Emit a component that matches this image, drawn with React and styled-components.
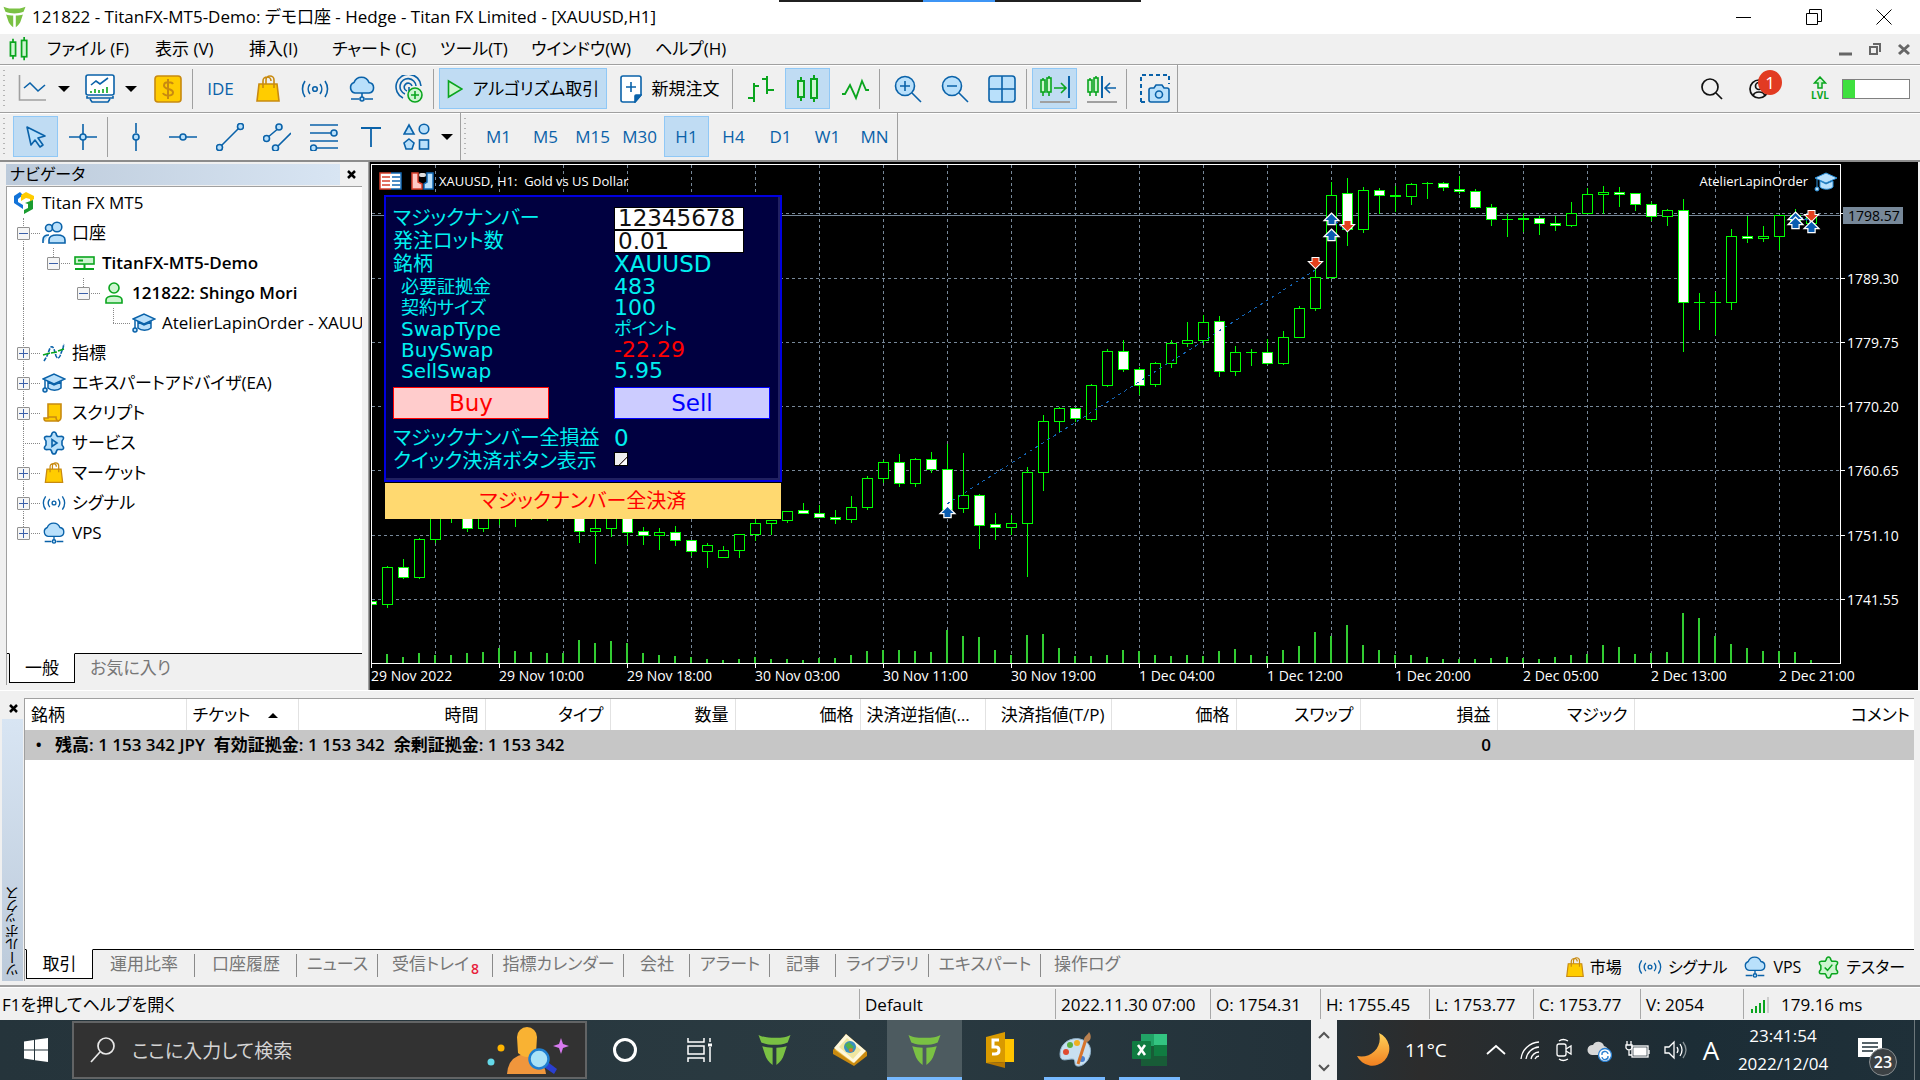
import React from "react";
import styled, { createGlobalStyle, css } from "styled-components";

const Global = createGlobalStyle`
  *, *::before, *::after { box-sizing: border-box; }
  body { margin: 0; background: #f0f0f0; }
  button, input { font: inherit; color: inherit; margin: 0; }
  button { background: none; border: 0; padding: 0; }
  svg { display: block; flex: none; }
  ul { list-style: none; margin: 0; padding: 0; }
`;

const BLUE = "#0a62a9";
const SKY = "#b9e0fb";
const GREEN = "#0aa51e";
const MINT = "#cdf5d0";
const GOLD = "#ffcc00";
const OCHRE = "#c88a10";

/* ---------- icons ---------- */

const Icon = ({ w = 28, h = 28, box = "0 0 28 28", children, ...p }) => (
  <svg width={w} height={h} viewBox={box} fill="none" stroke={BLUE} strokeWidth="1.6" aria-hidden="true" {...p}>{children}</svg>
);

const TitanLogo = ({ w, h, color = "#7ac143" }) => (
  <svg width={w} height={h} viewBox="0 0 34 34" fill={color} aria-hidden="true">
    <path d="M0 1c6 3 12 3 17 3s11 0 17-3l-3 8c-5 2-9 2.500-14 2.500S8 11 3 9z" />
    <path d="M4 13c3 1 7 1.500 11 1.500V33c-4-3-7-7-8-11zM30 13c-3 1-7 1.500-11 1.500V33c4-3 7-7 8-11z" />
  </svg>
);

const BagIcon = ({ w = 24, h = 28 }) => (
  <Icon w={w} h={h} box="0 0 24 28" stroke={OCHRE}>
    <path d="M3 9h18l2 17H1z" fill={GOLD} />
    <path d="M7 13V6a4 4 0 0 1 8 0M10 9V5a4 4 0 0 1 8 0v8" />
  </Icon>
);
const SignalIcon = ({ w = 28, h = 24 }) => (
  <Icon w={w} h={h} box="0 0 28 24">
    <circle cx="14" cy="12" r="2.300" />
    <path d="M9 7a8 8 0 0 0 0 10M19 7a8 8 0 0 1 0 10M4 4a14 14 0 0 0 0 16M24 4a14 14 0 0 1 0 16" />
  </Icon>
);
const CloudIcon = ({ w = 28, h = 26 }) => (
  <Icon w={w} h={h} box="0 0 28 26">
    <path d="M7 17a5.500 5.500 0 0 1-1-10.500 8 8 0 0 1 15 0A5.300 5.300 0 0 1 21 17z" fill={SKY} />
    <path d="M14 17v4M3 23h8M17 23h8" /><circle cx="14" cy="23" r="2" fill={SKY} />
  </Icon>
);
const CapIcon = ({ w = 24, h = 20 }) => (
  <Icon w={w} h={h} box="0 0 24 20" strokeWidth="1.500">
    <path d="M1 6l11-5 11 5-11 5z" fill={SKY} />
    <path d="M6 9v6c3 3 10 3 13 0V9l-7 3z" fill={SKY} />
    <path d="M3 7v9" /><circle cx="3" cy="17" r="2" fill={SKY} />
  </Icon>
);
const Gear = ({ green, w = 24 }) => (
  <Icon w={w} h={w} box="0 0 24 24" stroke={green ? GREEN : BLUE}>
    <path d="M12 1q2 0 2.500 3l1 1.500h2.500q3-.5 3.500 1t-1.500 3.500v4q2 2 1.500 3.500t-3.500 1h-2.500l-1 1.500Q14 23 12 23t-2.500-3l-1-1.500H6q-3 .5-3.500-1T4 14v-4Q2 8 2.500 6.500t3.500-1h2.500l1-1.500Q10 1 12 1z" fill={green ? MINT : SKY} strokeLinejoin="round" />
    {green ? <path d="M8 12l3 3 5-6" /> : <path d="M10 8.500v7l5-3.500z" />}
  </Icon>
);

const LineIcon = () => (
  <Icon><path d="M1.500 0v25H28" stroke="#a0a0a0" /><path d="M6 13l6-5 8 8 7-6" /></Icon>
);
const ProfileIcon = () => (
  <Icon w={30} h={30} box="0 0 30 30">
    <rect x="1" y="1" width="28" height="20" rx="2" fill="#fff" />
    <path d="M2 22v2h26v-2M5 25l2 3h16l2-3" />
    <path d="M6 11l5-4 4 3 8-6" /><path d="M6 19v-2M10 19v-4M14 19v-3M18 19v-4M22 19v-6" stroke={GREEN} />
  </Icon>
);
const DollarIcon = () => (
  <Icon stroke={OCHRE}>
    <rect x="1" y="1" width="26" height="26" rx="3" fill={GOLD} />
    <path d="M19 9c-1-2-9-3-9 1.500S19 13 19 17.500 10 21 9 18M14 4v20" strokeWidth="2" />
  </Icon>
);
const RadarIcon = () => (
  <Icon>
    <path d="M8 23A12.500 12.500 0 1 1 26 11M10 19A8 8 0 1 1 21 11" /><path d="M12 16a4 4 0 1 1 5-5" />
    <path d="M14 12v4" /><circle cx="20" cy="20" r="7" fill={MINT} stroke={GREEN} /><path d="M20 16v8M16 20h8" stroke={GREEN} />
  </Icon>
);
const PlayIcon = () => (
  <Icon w={16} h={20} box="0 0 16 20" stroke={GREEN}><path d="M1.500 2v16L15 10z" fill={MINT} /></Icon>
);
const NewDocIcon = () => (
  <Icon w={22} h={28} box="0 0 22 28">
    <path d="M1 3q0-2 2-2h16q2 0 2 2v17l-6 7H3q-2 0-2-2z" fill="#fff" />
    <path d="M21 20h-5q-1 0-1 1v6z" fill={BLUE} /><path d="M11 7v10M6 12h10" />
  </Icon>
);
const BarsIcon = () => (
  <Icon stroke={GREEN} strokeWidth="2"><path d="M1 23h6M7 8v19M7 11h5M20 1v18M15 4h5M20 15h7" /></Icon>
);
const CandlesIcon = ({ w = 24, h = 28 }) => (
  <Icon w={w} h={h} box="0 0 24 28" stroke={GREEN} strokeWidth="2">
    <path d="M5 2v24M18 0v27" /><rect x="2" y="6" width="6" height="16" fill={MINT} /><rect x="15" y="4" width="6" height="19" fill={MINT} />
  </Icon>
);
const ZigIcon = () => (
  <Icon stroke={GREEN} strokeWidth="1.800"><path d="M1 19h3l5-9 6 13 6-17 4 9h3" /></Icon>
);
const ZoomIcon = ({ plus }) => (
  <Icon><circle cx="11" cy="11" r="9.500" fill={SKY} /><path d="M18 18l9 9M6 11h10" />{plus && <path d="M11 6v10" />}</Icon>
);
const GridIcon = () => (
  <Icon><rect x="1" y="1" width="26" height="26" rx="3" fill={SKY} /><path d="M14 1v26M1 14h26" /></Icon>
);
const ShiftIcon = ({ end }) => (
  <Icon w={30} box="0 0 30 28">
    <path d="M3 3v18M9 1v20" stroke={GREEN} /><rect x="1" y="5" width="4" height="12" fill={MINT} stroke={GREEN} /><rect x="7" y="3" width="4" height="14" fill={MINT} stroke={GREEN} />
    {end
      ? <><path d="M14 13h12M21 8l5 5-5 5" stroke={GREEN} /><path d="M29 1v22" strokeWidth="2" /></>
      : <><path d="M15 1v22" strokeWidth="2" /><path d="M18 13h11M23 8l-5 5 5 5" /></>}
    <path d="M0 27h30" stroke="#a0a0a0" strokeWidth="2" />
  </Icon>
);
const CameraIcon = () => (
  <Icon w={30} h={30} box="0 0 30 30">
    <path d="M1 28V1h28v9M1 28h5" strokeDasharray="4 3" strokeWidth="2" />
    <path d="M9 16q0-2 2-2h3l2-3h6l2 3h3q2 0 2 2v10q0 2-2 2H11q-2 0-2-2z" fill={SKY} /><circle cx="19" cy="20.500" r="3.500" />
  </Icon>
);

const CursorIcon = () => (
  <Icon w={22} h={24} box="0 0 22 24"><path d="M2 2l4 18 4-5 5 7 3-2-5-7 7-2z" fill={SKY} strokeLinejoin="round" /></Icon>
);
const CrossIcon = () => (
  <Icon><path d="M14 1v10M14 17v10M0 14h11M17 14h11" /><circle cx="14" cy="14" r="3" fill={SKY} /></Icon>
);
const VLineIcon = () => (
  <Icon><path d="M14 0v10M14 17v11" /><circle cx="14" cy="14" r="3" fill={SKY} /></Icon>
);
const HLineIcon = () => (
  <Icon><path d="M0 14h11M17 14h11" /><circle cx="14" cy="14" r="3" fill={SKY} /></Icon>
);
const TrendIcon = () => (
  <Icon><path d="M5 23L23 5" /><circle cx="3.500" cy="24.500" r="3" fill={SKY} /><circle cx="24.500" cy="3.500" r="3" fill={SKY} /></Icon>
);
const ChannelIcon = () => (
  <Icon><path d="M4 15L17 4M13 25L28 10" /><circle cx="3.500" cy="15.500" r="3" fill={SKY} /><circle cx="16" cy="4" r="3" fill={SKY} /><circle cx="12.500" cy="25" r="3" fill={SKY} /></Icon>
);
const FiboIcon = () => (
  <Icon><path d="M0 2h28M0 10h21M0 18h28M6 25h22" /><circle cx="24" cy="10" r="3" fill={SKY} /><circle cx="3.500" cy="25" r="3" fill={SKY} /></Icon>
);
const TextIcon = () => (
  <Icon w={20} h={20} box="0 0 20 20"><path d="M0 1h20M10 1v19" strokeWidth="1.800" /></Icon>
);
const ShapesIcon = () => (
  <Icon><path d="M6 2l5 9H1z" fill={SKY} /><circle cx="21" cy="6" r="4.800" fill={SKY} /><path d="M6 16l5 4-2 6H3l-2-6z" fill={SKY} /><rect x="16.500" y="17" width="9" height="9" fill={SKY} /></Icon>
);

const MqlLogo = () => (
  <svg width="24" height="24" viewBox="0 0 24 24" aria-hidden="true">
    <path d="M2 5l6-4 3 3-5 4v3l5 3v4L2 12z" fill="#1273d8" /><path d="M9 4l5-3 8 4v3l-4 3V8l-4-1-5 3z" fill="#ffcc00" />
    <path d="M13 12l8-3v9l-9 5V19l4-2v-4z" fill="#1a9c30" />
  </svg>
);
const PeopleIcon = () => (
  <Icon w={24} h={24} box="0 0 24 24"><circle cx="7" cy="7" r="3.500" fill={SKY} /><path d="M1 22v-3q0-5 6-5" fill={SKY} /><circle cx="15" cy="6" r="4.800" fill={SKY} /><path d="M7 22v-3q0-5 8-5t8 5v3z" fill={SKY} /></Icon>
);
const ServerIcon = () => (
  <Icon w={24} h={20} box="0 0 24 20" stroke={GREEN}><rect x="3" y="4" width="19" height="7" fill={MINT} /><path d="M6 7.500h5M12.500 11v4M3 16h19" strokeWidth="2" /></Icon>
);
const PersonIcon = () => (
  <Icon w={24} h={24} box="0 0 24 24" stroke={GREEN}><circle cx="12" cy="7" r="5" fill={MINT} /><path d="M4 22v-3q0-4 8-4t8 4v3z" fill={MINT} /></Icon>
);
const IndicatorIcon = () => (
  <Icon w={24} h={20} box="0 0 24 20"><path d="M2 18l3-5 3-8q2-3 4 1l2 7q2 4 4 0l3-8 1-4" strokeDasharray="4 1" /><path d="M1 12l7-2M9 10l6-1M16 8l6-2" stroke={GREEN} /></Icon>
);
const ScriptIcon = () => (
  <Icon w={24} h={20} box="0 0 24 20" stroke={OCHRE}><path d="M6 1h13v13q0 4-4 4H4q-2 0-2-3h4z" fill={GOLD} /><path d="M6 14h8q0 4 3 4" /></Icon>
);

const Icons = { mql: MqlLogo, people: PeopleIcon, server: ServerIcon, person: PersonIcon, cap: CapIcon, indicator: IndicatorIcon, script: ScriptIcon, gear: Gear, signal: () => <SignalIcon w={24} h={20} />, bag: () => <BagIcon w={20} h={22} />, cloud: () => <CloudIcon w={24} h={22} /> };

/* ---------- window shell ---------- */

const Shell = styled.div`
  display: flex; flex-direction: column; min-height: 100vh;
  font: 17px/24px "Open Sans", "Noto Sans CJK JP", sans-serif;
  font-feature-settings: "palt"; color: #000; background: #f0f0f0;
`;
const TitleBar = styled.header`
  position: relative; display: flex; align-items: center; height: 34px; padding: 0 1px 0 3px; gap: 6px; background: #fff;
`;
const CaptureStrip = styled.div`
  position: absolute; top: 0; left: 779px; width: 362px; height: 2px;
  background: linear-gradient(90deg, #202020 144px, #3e95f5 144px 216px, #202020 216px);
`;
const Title = styled.h1` flex: 1; margin: 0; font-size: 17px; font-weight: 400; white-space: nowrap; `;
const WinButtons = styled.div` display: flex; `;
const WinButton = styled.button` width: 70px; height: 30px; display: grid; place-items: center; `;
const MenuBar = styled.nav`
  display: flex; align-items: center; height: 30px; padding-left: 8px; color: #000;
`;
const MenuItem = styled.button` width: ${p => p.$w}px; text-align: left; white-space: nowrap; `;
const MdiButtons = styled.div` margin-left: auto; display: flex; gap: 15px; padding-right: 9px; color: #666; `;
const MdiButton = styled.button` display: grid; place-items: center; width: 14px; height: 16px; `;

const ToolRow = styled.div`
  display: flex; align-items: stretch; height: ${p => p.$h}px; border-top: 1px solid #a0a0a0;
  box-shadow: inset 0 1px #fff;
`;
const Band = styled.div`
  display: flex; align-items: center; gap: 2px; padding-left: ${p => p.$pad}px;
  border-right: 1px solid #a0a0a0; position: relative;
  &::before {
    content: ""; position: absolute; left: 2px; top: 3px; bottom: 2px; width: 5px;
    background: radial-gradient(circle, #b4b4b4 1px, transparent 1px) 0 0 / 4px 5px;
  }
`;
const Tool = styled.button`
  display: flex; align-items: center; justify-content: center; gap: ${p => p.$gap || 6}px;
  width: ${p => p.$w || 45}px; height: 41px; white-space: nowrap; color: ${p => p.$ink || BLUE};
  border: 1px solid transparent;
  ${p => p.$on && css`background: #c0dcf3; border-color: #90c8f6;`}
`;
const Divider = styled.span` width: 1px; height: 40px; margin-right: 3px; background: #a0a0a0; `;
const Caret = styled.span` border: 6px solid transparent; border-top-color: #000; border-bottom: 0; `;
const Search = styled.div` margin-left: auto; display: flex; align-items: center; padding-right: 10px; `;
const AccountButton = styled.button` position: relative; margin: 0 21px 0 26px; width: 40px; height: 30px; display: flex; align-items: center; `;
const Badge = styled.span`
  position: absolute; left: 9px; top: -4px; width: 24px; height: 25px; border-radius: 50%;
  background: #e23b22; color: #fff; text-align: center; line-height: 25px;
`;
const Level = styled.span` display: flex; flex-direction: column; align-items: center; width: 20px; color: ${GREEN}; font: 700 10px/12px "Open Sans", sans-serif; `;
const Meter = styled.span` width: 68px; height: 20px; margin-left: 12px; border: 1px solid #808080; background: linear-gradient(90deg, #3fe03f 12px, #fff 12px); `;

/* ---------- navigator ---------- */

const Workspace = styled.main` display: flex; gap: 7px; height: 530px; border-top: 2px solid #8c8c8c; `;
const Navigator = styled.aside` display: flex; flex-direction: column; width: 362px; padding: 2px 0 5px 6px; `;
const PanelHead = styled.div` display: flex; align-items: center; height: 21px; font-size: 16px; `;
const PanelTitle = styled.h2`
  flex: 1; margin: 0; padding-left: 4px; font: inherit; line-height: 21px;
  background: linear-gradient(90deg, #bccada, #d8e5f3);
`;
const CloseButton = styled.button` width: 22px; height: 21px; display: grid; place-items: center; `;
const Tree = styled.ul`
  flex: 1; margin-top: 1px; padding: 1px 0 0 1px; border: 1px solid #a0a0a0; border-width: 1px 0 0 1px;
  background: #fff; overflow: hidden;
`;
const TreeRow = styled.li`
  display: flex; align-items: center; height: 30px; white-space: nowrap; font-weight: ${p => p.$bold ? 600 : 400};
`;
const Branch = styled.span`
  position: relative; flex: none; width: 30px; height: 30px; display: grid; place-items: center;
  &::before { content: ""; position: absolute; left: 15px; top: 0; height: ${p => p.$tail ? "15px" : "30px"}; border-left: 1px dotted ${p => p.$blank ? "transparent" : "#888"}; }
  ${p => p.$node && css`&::after { content: ""; position: absolute; left: 15px; right: -2px; top: 15px; border-top: 1px dotted #888; }`}
`;
const Expander = styled.button`
  position: relative; z-index: 1; width: 13px; height: 13px; border: 1px solid #919191; border-radius: 1px;
  background:
    linear-gradient(#3a5fa8, #3a5fa8) center / 9px 1px no-repeat,
    linear-gradient(#3a5fa8, #3a5fa8) center / ${p => p.$open ? "0 0" : "1px 9px"} no-repeat,
    #f5f5f5;
`;
const TreeIcon = styled.span` display: grid; place-items: center; flex: none; width: 24px; margin: 0 6px 0 4px; `;
const NavTabs = styled.div` display: flex; height: 32px; padding-left: 2px; border-left: 1px solid #a0a0a0; background: #f0f0f0; box-shadow: inset 0 1px #000; `;
const SheetTab = styled.button`
  height: 30px; padding: 0 15px; white-space: nowrap; color: #777; text-align: center;
  ${p => p.$on && css`background: #fff; color: #000; border: 1px solid #000; border-top-color: #fff;`}
`;

const TREE = [
  ["口座", "people", 0, "open"],
  ["TitanFX-MT5-Demo", "server", 1, "open", true],
  ["121822: Shingo Mori", "person", 2, "open", true],
  ["AtelierLapinOrder - XAUU", "cap", 3, "leaf"],
  ["指標", "indicator", 0, "shut"],
  ["エキスパートアドバイザ(EA)", "cap", 0, "shut"],
  ["スクリプト", "script", 0, "shut"],
  ["サービス", "gear", 0, "leaf"],
  ["マーケット", "bag", 0, "shut"],
  ["シグナル", "signal", 0, "shut"],
  ["VPS", "cloud", 0, "shut"],
];

const NavTree = () => (
  <Tree>
    <TreeRow><TreeIcon><MqlLogo /></TreeIcon>Titan FX MT5</TreeRow>
    {TREE.map(([label, icon, depth, state, bold]) => {
      const Pic = Icons[icon];
      return (
        <TreeRow key={label} $bold={bold}>
          {Array.from({ length: depth }, (_, i) => <Branch key={i} $blank={i > 0} />)}
          <Branch $node $tail={depth > 0 || label === "VPS"}>
            {state !== "leaf" && <Expander $open={state === "open"} aria-label={label} />}
          </Branch>
          <TreeIcon><Pic /></TreeIcon>{label}
        </TreeRow>
      );
    })}
  </Tree>
);

/* ---------- chart ---------- */

/* [high, bodyTop, bodyBottom, low, falling] for each hour */
const CANDLES = [
  [601, 601, 604, 604, 1], [566, 567, 604, 608], [559, 567, 577, 579, 1], [538, 539, 577, 579], [500, 505, 539, 543],
  [500, 505, 515, 523], [500, 505, 528, 532, 1], [500, 510, 528, 532], [500, 505, 515, 525], [500, 505, 515, 527],
  [500, 505, 515, 520], [500, 505, 515, 521], [500, 505, 515, 517], [500, 505, 531, 543, 1], [500, 528, 531, 564],
  [500, 505, 528, 537], [500, 505, 532, 545, 1], [527, 531, 535, 545, 1], [528, 532, 535, 550], [526, 532, 540, 546, 1],
  [540, 540, 551, 556, 1], [543, 545, 551, 568], [546, 550, 557, 557], [534, 534, 550, 558], [519, 523, 534, 541],
  [520, 520, 523, 535], [511, 511, 520, 523], [503, 510, 513, 513, 1], [505, 513, 517, 517, 1], [510, 517, 519, 524, 1],
  [496, 507, 519, 523], [476, 478, 507, 510], [460, 462, 478, 483], [454, 462, 483, 487, 1], [458, 459, 483, 487],
  [452, 459, 469, 473, 1], [444, 469, 509, 509, 1], [453, 495, 508, 513], [494, 495, 525, 549, 1], [513, 524, 527, 540, 1],
  [515, 523, 527, 535], [467, 472, 523, 577], [415, 421, 472, 491], [407, 408, 421, 433], [408, 408, 418, 422, 1],
  [384, 385, 419, 422], [349, 351, 385, 387], [340, 351, 369, 372, 1], [367, 369, 385, 395, 1], [362, 363, 384, 387],
  [340, 343, 363, 368], [322, 340, 343, 347], [315, 322, 340, 345], [316, 321, 371, 377, 1], [346, 352, 371, 376],
  [349, 352, 352, 366], [339, 352, 363, 365, 1], [331, 337, 363, 365], [306, 308, 337, 337], [268, 277, 308, 311],
  [182, 195, 277, 279], [178, 193, 229, 246, 1], [187, 190, 229, 233], [188, 190, 195, 214, 1], [186, 195, 196, 212],
  [183, 184, 196, 205], [182, 183, 183, 199], [182, 183, 187, 191, 1], [176, 189, 191, 194, 1], [189, 191, 207, 209, 1],
  [204, 207, 219, 226, 1], [214, 219, 219, 237], [213, 218, 219, 232], [216, 218, 223, 235, 1], [216, 223, 225, 231, 1],
  [202, 213, 225, 227], [188, 194, 213, 213], [186, 192, 194, 214], [187, 192, 194, 207, 1], [193, 193, 204, 211, 1],
  [202, 204, 216, 221, 1], [209, 210, 216, 226], [199, 210, 302, 352, 1], [293, 302, 302, 330], [292, 302, 302, 335],
  [229, 236, 302, 310], [216, 236, 238, 243, 1], [226, 236, 238, 242], [215, 215, 236, 250], [209, 215, 222, 224], [215, 215, 223, 226],
];
const VOLUMES = [
  0, 9, 6, 10, 8, 8, 10, 11, 15, 12, 11, 10, 10, 23, 20, 22, 20, 10, 8, 7, 6, 4, 3, 4, 6, 4, 4, 3, 5, 5, 8, 12, 13, 13, 12, 11,
  33, 27, 26, 13, 8, 28, 29, 15, 7, 7, 8, 13, 12, 8, 7, 8, 7, 12, 14, 8, 7, 13, 17, 31, 27, 38, 18, 13, 8,
  8, 6, 4, 4, 4, 5, 6, 5, 4, 6, 8, 9, 18, 16, 9, 10, 11, 50, 45, 27, 19, 15, 12, 12, 11, 3,
];
const PRICES = [[278, "1789.30"], [342, "1779.75"], [406, "1770.20"], [470, "1760.65"], [535, "1751.10"], [599, "1741.55"]];
const TIMES = ["29 Nov 2022", "29 Nov 10:00", "29 Nov 18:00", "30 Nov 03:00", "30 Nov 11:00", "30 Nov 19:00", "1 Dec 04:00", "1 Dec 12:00", "1 Dec 20:00", "2 Dec 05:00", "2 Dec 13:00", "2 Dec 21:00"];

const ChartPane = styled.section`
  position: relative; flex: 1; min-width: 0; margin-right: 2px; border-left: 1px solid #696969; background: #000; overflow: hidden;
  box-shadow: -1px 0 #a0a0a0;
`;
const Plot = styled.svg` width: 100%; height: 528px; `;
const Label = styled.text` font: ${p => p.$size || 14}px "Open Sans", sans-serif; fill: ${p => p.$fill || "#fff"}; `;

const UpMark = ({ x, y }) => (
  <path d={`M${x} ${y}l6 6h-3v4h-6v-4h-3z`} fill="#0a5cb0" stroke="#fff" strokeWidth="2.500" paintOrder="stroke" />
);
const DownMark = ({ x, y }) => (
  <path d={`M${x} ${y}l6 -6h-3v-4h-6v4h-3z`} fill="#e2401c" stroke="#fff" strokeWidth="2" paintOrder="stroke" />
);

const PriceChart = () => (
  <Plot role="img" aria-label="XAUUSD, H1">
    <g transform="translate(-370 -162)" shapeRendering="crispEdges">
      <g stroke="#778899" strokeDasharray="3 3">
        {[213, 278, 342, 406, 470, 535, 599].map(y => <path key={y} d={`M372 ${y}.5H1840`} />)}
        {Array.from({ length: 22 }, (_, i) => <path key={i} d={`M${435 + i * 64}.5 165V663`} />)}
      </g>
      <path d="M372 215.500H1840" stroke="#778899" />
      <g fill="#32cd32">
        {VOLUMES.map((v, i) => <rect key={i} x={370 + i * 16} y={663 - v} width="2" height={v} />)}
      </g>
      <g stroke="#00ff00">
        {CANDLES.map(([h, t, b, l, down], i) => {
          const x = 371 + i * 16;
          return (
            <g key={i}>
              <path d={`M${x}.5 ${h}V${t}M${x}.5 ${b}V${l}`} />
              {b - t < 1
                ? <path d={`M${x - 5} ${t}.5H${x + 6}`} />
                : <rect x={x - 4.5} y={t + 0.5} width="10" height={b - t} fill={down ? "#fff" : "#000"} />}
            </g>
          );
        })}
      </g>
      <path d="M947 504L1315 270" stroke="#1464b4" strokeDasharray="3 4" />
      <path d="M1331 218L1347 231M1795 216L1811 221" stroke="#1464b4" strokeDasharray="3 2" strokeWidth="2" />
      <rect x="370" y="162" width="1" height="520" fill="#000" />
      <path d="M371.500 668V164.500H1840.500V663.500H371.500" fill="none" stroke="#fff" />
      <path d={TIMES.map((_, i) => `M${371 + i * 128}.5 663v5`).join("")} stroke="#fff" />
      <path d={[213, ...PRICES.map(p => p[0])].map(y => `M1841 ${y}.5h4`).join("")} stroke="#fff" />
    </g>
    <g transform="translate(-370 -162)">
      <UpMark x={947.5} y={507} /><DownMark x={1315.5} y={268} />
      <UpMark x={1331.5} y={214} /><UpMark x={1331.5} y={230} /><DownMark x={1347.5} y={231} />
      <UpMark x={1795.5} y={213} /><UpMark x={1795.5} y={218} /><DownMark x={1811.5} y={221} /><UpMark x={1811.5} y={222} />
      {PRICES.map(([y, t]) => <Label key={t} x="1847" y={y + 6}>{t}</Label>)}
      <rect x="1843" y="207" width="60" height="17" fill="#778899" />
      <Label x="1848" y="221" $fill="#000">1798.57</Label>
      {TIMES.map((t, i) => <Label key={t} x={371 + i * 128} y="681">{t}</Label>)}
      <g strokeWidth="1.500">
        <rect x="380" y="173" width="21" height="16" fill="#fff" />
        <path d="M391 173h-11v16h11M382 177h8M382 181h8M382 185h8" fill="none" stroke="#d8402c" />
        <path d="M391 173h10v16h-10M392 177h8M392 181h8M392 185h8" fill="none" stroke="#1268b4" />
        <path d="M412 173h6v9l4 2v5h-10z" fill="#ffc9c4" stroke="#d8402c" />
        <path d="M433 173h-6v9l-3 2v5h9z" fill={SKY} stroke="#1268b4" />
        <rect x="419" y="173" width="7" height="4" rx="2" fill="#ddd" stroke="none" />
      </g>
      <Label $size={13} x="439" y="186" xmlSpace="preserve">XAUUSD, H1:  Gold vs US Dollar</Label>
      <Label $size={13} x="1808" y="186" textAnchor="end">AtelierLapinOrder</Label>
      <svg x="1814" y="172" width="24" height="20" viewBox="0 0 24 20" stroke="#2a8fd8" fill={SKY}>
        <path d="M1 6l11-5 11 5-11 5zM6 9v6c3 3 10 3 13 0V9l-7 3zM3 7v9" /><circle cx="3" cy="17" r="2" />
      </svg>
    </g>
  </Plot>
);

/* ---------- order panel, floating over the chart ---------- */

const OrderPanel = styled.form`
  position: absolute; left: 14px; top: 33px; width: 398px;
  font-family: "DejaVu Sans", "Noto Sans CJK JP", sans-serif;
`;
const OrderBody = styled.div`
  height: 287px; padding: 9px 7px; color: #00f0f0; background: #000040;
  border: 2px solid #0000e0; box-shadow: inset -2px -2px #202060;
`;
const Field = styled.div`
  display: grid; grid-template-columns: 221px auto; align-items: center; white-space: nowrap; justify-content: start;
  height: ${p => p.$sub ? 21 : 23}px; font-size: ${p => p.$sub ? 18 : 20}px;
  & > :first-child { padding-left: ${p => p.$sub ? 8 : 0}px; }
  & > .latin { font-size: ${p => p.$sub ? 22 : 23}px; }
  & > .latin:first-child { font-size: 20px; }
`;
const NumberBox = styled.input`
  width: 130px; height: 23px; padding: 0 3px; border: 1px solid #000; background: #fff; color: #101010;
  font-size: 23px; line-height: 21px; border-radius: 0;
`;
const Orders = styled.div` display: grid; grid-template-columns: 156px 156px; gap: 65px; margin: 7px 0; `;
const OrderButton = styled.button`
  height: 32px; font-size: 23px; line-height: 30px; color: ${p => p.$ink}; background: ${p => p.$bg}; border: 1px solid ${p => p.$ink};
`;
const Tick = styled.input`
  appearance: none; width: 14px; height: 14px; border: 1px solid #000; margin: 0 0 4px;
  background: linear-gradient(135deg, #eee 65%, #302020 66%, #fff 74%);
`;
const CloseAll = styled.button`
  display: block; width: 396px; height: 36px; margin: 1px 1px 0; background: #ffd970; color: #ff0000; font-size: 20px;
`;
const Value = styled.span` color: ${p => p.$ink || "inherit"}; `;

const SPECS = [["必要証拠金", "483"], ["契約サイズ", "100"], ["SwapType", "ポイント"], ["BuySwap", "-22.29", "#ff0000"], ["SellSwap", "5.95"]];
const latin = s => (/^[\x20-\x7e]+$/.test(s) ? "latin" : undefined);

const Order = () => (
  <OrderPanel onSubmit={e => e.preventDefault()}>
    <OrderBody>
      <Field><label htmlFor="magic">マジックナンバー</label><NumberBox id="magic" defaultValue="12345678" /></Field>
      <Field><label htmlFor="lots">発注ロット数</label><NumberBox id="lots" defaultValue="0.01" /></Field>
      <Field><span>銘柄</span><span className="latin">XAUUSD</span></Field>
      {SPECS.map(([k, v, ink]) => (
        <Field key={k} $sub><span className={latin(k)}>{k}</span><Value className={latin(v)} $ink={ink}>{v}</Value></Field>
      ))}
      <Orders>
        <OrderButton type="button" $ink="#ff0000" $bg="#ffcccc">Buy</OrderButton>
        <OrderButton type="button" $ink="#0000ff" $bg="#ccccff">Sell</OrderButton>
      </Orders>
      <Field><span>マジックナンバー全損益</span><span className="latin">0</span></Field>
      <Field><label htmlFor="quick">クイック決済ボタン表示</label><Tick id="quick" type="checkbox" /></Field>
    </OrderBody>
    <CloseAll type="button">マジックナンバー全決済</CloseAll>
  </OrderPanel>
);

/* ---------- toolbox ---------- */

const Toolbox = styled.section` flex: 1; display: flex; padding: 7px 6px 4px 2px; border-top: 1px solid #fff; `;
const Rail = styled.div` display: flex; flex-direction: column; width: 22px; `;
const RailTitle = styled.h2`
  flex: 1; margin: 0; width: 21px; font-size: 14px; line-height: 21px; font-weight: 400; writing-mode: vertical-rl; transform: rotate(180deg);
  font-feature-settings: "vpal"; padding-top: 4px; background: linear-gradient(#bccada, #d8e5f3);
`;
const ToolboxMain = styled.div` flex: 1; min-width: 0; display: flex; flex-direction: column; border: 1px solid #a0a0a0; border-width: 1px 0 0 1px; background: #fff; `;
const Trades = styled.table` width: 100%; table-layout: fixed; border-collapse: collapse; `;
const Th = styled.th`
  width: ${p => p.$w ? p.$w + "px" : "auto"}; height: 31px; padding: 0 6px; font-weight: 400; text-align: ${p => p.$left ? "left" : "right"};
  border-right: 1px solid #e2e2e2; white-space: nowrap; overflow: hidden; text-overflow: ellipsis;
  &:last-child { border: 0; padding-right: 4px; }
`;
const SortMark = styled.span` display: inline-block; margin: 0 0 3px 18px; border: 5px solid transparent; border-bottom-color: #000; border-top: 0; `;
const Total = styled.td`
  height: 30px; padding: 0 6px; background: #c6c6c6; font-weight: 600; white-space: pre; text-align: ${p => p.$right ? "right" : "left"};
`;
const SheetBar = styled.div`
  display: flex; height: 32px; margin-top: auto; background: #f0f0f0; box-shadow: inset 0 1px #000; padding-left: 1px;
`;
const SheetCell = styled.button`
  width: ${p => p.$w}px; height: 30px; white-space: nowrap; color: #777; position: relative;
  &::after { content: ""; position: absolute; right: 0; top: 5px; height: 23px; border-right: ${p => p.$last ? 0 : 1}px solid #8a8a8a; }
  ${p => p.$on && css`background: #fff; color: #000; border: 1px solid #000; border-top-color: #fff; &::after { display: none; }`}
`;
const Count = styled.sub` color: #e8203c; font-size: 14px; font-weight: 600; line-height: 0; margin-left: 2px; `;
const Shortcuts = styled.div` display: flex; align-items: center; gap: 16px; margin-left: auto; padding: 4px 9px 0 0; font-size: 16px; `;
const Shortcut = styled.a` display: flex; align-items: center; gap: 6px; color: #000; text-decoration: none; white-space: nowrap; `;

const COLUMNS = [["銘柄", 161, 1], ["チケット", 112, 1], ["時間", 187], ["タイプ", 125], ["数量", 125], ["価格", 125], ["決済逆指値(S/L)", 125], ["決済指値(T/P)", 126], ["価格", 125], ["スワップ", 124], ["損益", 137], ["マジック", 137], ["コメント"]];
const SHEETS = [["取引", 67], ["運用比率", 102], ["口座履歴", 102], ["ニュース", 81], ["受信トレイ", 115], ["指標カレンダー", 131], ["会社", 66], ["アラート", 80], ["記事", 66], ["ライブラリ", 93], ["エキスパート", 112], ["操作ログ", 92]];

/* ---------- status bar ---------- */

const StatusBar = styled.footer` display: flex; align-items: center; height: 35px; border-top: 2px solid #a0a0a0; box-shadow: inset 0 1px #fff; `;
const Status = styled.span`
  display: flex; align-items: center; gap: 10px; height: 30px; padding: 2px 0 0 ${p => p.$first ? 2 : 5}px; white-space: nowrap;
  width: ${p => p.$w}px; ${p => p.$grow && "flex: 1 1 0;"}
  border-left: ${p => p.$first ? 0 : 1}px solid #a8a8a8;
`;
const STATUS = [["Default", 196], ["2022.11.30 07:00", 155], ["O: 1754.31", 110], ["H: 1755.45", 109], ["L: 1753.77", 104], ["C: 1753.77", 107], ["V: 2054", 103]];

/* ---------- taskbar ---------- */

const Taskbar = styled.footer` display: flex; align-items: center; height: 60px; background: linear-gradient(90deg, #25343b, #2a3a41 45%, #23323a 68%, #2c2c2c 74%, #1c2d36 88%, #1f3039); color: #fff; `;
const StartButton = styled.button` width: 72px; height: 60px; display: grid; place-items: center; `;
const SearchBox = styled.label`
  display: flex; align-items: center; width: 515px; height: 58px; padding: 0 14px 0 16px; gap: 16px;
  background: #323232; border: 2px solid #626465;
`;
const SearchInput = styled.input`
  flex: 1; min-width: 0; border: 0; outline: 0; background: none; font-size: 19px; padding: 2px 0 0;
  &::placeholder { color: #d4d4d4; opacity: 1; }
`;
const Task = styled.button`
  width: 75px; height: 60px; display: grid; place-items: center; position: relative;
  background: ${p => p.$on ? "#4d5b60" : "none"};
  &::after { content: ""; position: absolute; bottom: 0; left: ${p => p.$on ? 0 : 7}px; right: ${p => p.$on ? 0 : 7}px; height: 3px; background: ${p => p.$run || p.$on ? "#76b9ff" : "none"}; }
`;
const Scroller = styled.div` display: flex; flex-direction: column; justify-content: space-between; align-items: center; width: 26px; height: 60px; padding: 11px 0 8px; margin-left: auto; background: #f0f0f0; `;
const Weather = styled.button` display: flex; align-items: center; gap: 14px; width: 148px; padding-left: 20px; font-size: 19px; `;
const Tray = styled.div` display: flex; align-items: center; gap: 12px; `;
const ImeMode = styled.button` font-size: 26px; line-height: 30px; width: 24px; `;
const Clock = styled.time` display: flex; flex-direction: column; align-items: center; width: 112px; margin-left: 4px; font-size: 17px; line-height: 28px; `;
const Notice = styled.button` position: relative; width: 76px; height: 60px; border-right: 1px solid #6c777b; margin-right: 5px; padding-left: 19px; `;
const NoticeCount = styled.span`
  position: absolute; left: 30px; top: 28px; width: 28px; height: 28px; border-radius: 50%; border: 1px solid #8a8f92;
  background: #3c4144; line-height: 26px; text-align: center; font-size: 16px; font-weight: 600;
`;

const Helper = () => (
  <svg width="86" height="48" viewBox="0 0 86 48" aria-hidden="true">
    <circle cx="16" cy="22" r="3.500" fill="#ffb400" /><circle cx="6" cy="36" r="3.500" fill="#64d8e8" />
    <path d="M22 48q1-17 17-20 20 3 22 20z" fill="#f0963c" /><path d="M32 11a10 10 0 0 1 20 0l-1 16q-9 8-18 0z" fill="#f9b233" />
    <path d="M60 34l12 9-3 5-13-9z" fill="#2a3fd0" /><circle cx="54" cy="33" r="9.500" fill="#a9e2f7" stroke="#1f7fd0" strokeWidth="2.500" />
    <path d="M76 12l2 6 6 2-6 2-2 6-2-6-6-2 6-2z" fill="#d87af0" />
  </svg>
);
const BookIcon = () => (
  <svg width="36" height="34" viewBox="0 0 36 34" aria-hidden="true">
    <path d="M1 17L14 1l21 18v4L22 33 1 21z" fill="#c98a10" /><path d="M3 17L14 4l18 14-11 12z" fill="#e8c050" /><path d="M2 15L14 1l20 17-12 12z" fill="#fff8dc" /><path d="M7 14l8-9 14 12-8 9z" fill="#f0e6a0" />
    <circle cx="18" cy="14" r="6" fill="#3a8fc0" /><path d="M13 12l4-3 5 5-4 5z" fill="#54b04a" /><circle cx="19" cy="17" r="2" fill="#d87030" />
  </svg>
);
const MetaEditorIcon = () => (
  <svg width="30" height="36" viewBox="0 0 30 36" aria-hidden="true">
    <path d="M15 7h14v23H15z" fill="#ffc400" /><path d="M1 5l19-5v30L1 31z" fill="#d99a00" /><path d="M1 31l19-1v6z" fill="#b87800" />
    <path d="M14 8H8v7h3q3 0 3 3.500T10 22H7" fill="none" stroke="#fff" strokeWidth="3" />
  </svg>
);
const PaintIcon = () => (
  <svg width="36" height="36" viewBox="0 0 36 36" aria-hidden="true">
    <path d="M3 22C3 11 14 5 23 7s12 9 10 16-8 12-13 11c-4-1 0-7-5-7S3 31 3 22z" fill="#c8dff0" stroke="#8fb0c8" />
    <circle cx="9" cy="20" r="3" fill="#e04a30" /><circle cx="13" cy="13" r="3" fill="#5cb040" /><circle cx="20" cy="11" r="3" fill="#f0b020" /><circle cx="25" cy="27" r="3" fill="#4a80d0" />
    <path d="M21 32L29 7" stroke="#d8742c" strokeWidth="3" /><path d="M27 8c0-4 4-5 5-8 3 4 2 9-2 10z" fill="#b88050" />
  </svg>
);
const ExcelIcon = () => (
  <svg width="36" height="34" viewBox="0 0 36 34" aria-hidden="true">
    <path d="M9 1h26v32H9z" fill="#185c37" /><path d="M9 1h13v12H9z" fill="#21a366" /><path d="M22 1h13v12H22z" fill="#33c481" /><path d="M22 12h13v11H22z" fill="#107c41" />
    <rect y="8" width="19" height="18" rx="1" fill="#107c41" /><path d="M6 12l7 10M13 12L6 22" stroke="#fff" strokeWidth="2.500" />
  </svg>
);
const TrayIcon = ({ w = 22, children }) => <svg width={w} height="24" viewBox={`0 0 ${w} 24`} fill="none" stroke="#fff" strokeWidth="1.300" aria-hidden="true">{children}</svg>;

/* ---------- page ---------- */

export default function App() {
  return (
    <>
      <Global />
      <Shell>
        <TitleBar>
          <CaptureStrip />
          <TitanLogo w={23} h={22} />
          <Title>121822 - TitanFX-MT5-Demo: デモ口座 - Hedge - Titan FX Limited - [XAUUSD,H1]</Title>
          <WinButtons>
            <WinButton aria-label="Minimize"><svg width="16" height="16" stroke="#000"><path d="M0 8.500h15" /></svg></WinButton>
            <WinButton aria-label="Restore"><svg width="16" height="16" stroke="#000" fill="none"><path d="M.5 4.500h11v11H.5zM3.500 4V.5h12v12H12" /></svg></WinButton>
            <WinButton aria-label="Close"><svg width="16" height="16" stroke="#000"><path d="M.5 .5l15 15M15.500 .5l-15 15" /></svg></WinButton>
          </WinButtons>
        </TitleBar>

        <MenuBar>
          <MenuItem $w={39} aria-label="Chart window"><CandlesIcon w={22} h={24} /></MenuItem>
          <MenuItem $w={108}>ファイル (F)</MenuItem><MenuItem $w={94}>表示 (V)</MenuItem><MenuItem $w={83}>挿入(I)</MenuItem>
          <MenuItem $w={108}>チャート (C)</MenuItem><MenuItem $w={91}>ツール(T)</MenuItem><MenuItem $w={124}>ウインドウ(W)</MenuItem><MenuItem $w={90}>ヘルプ(H)</MenuItem>
          <MdiButtons>
            <MdiButton aria-label="Minimize chart"><svg width="14" height="16" stroke="#666" strokeWidth="3"><path d="M0 13h13" /></svg></MdiButton>
            <MdiButton aria-label="Restore chart"><svg width="14" height="16" stroke="#666" strokeWidth="2" fill="none"><path d="M2 6h7v7H2zM5 3h7v8" /></svg></MdiButton>
            <MdiButton aria-label="Close chart"><svg width="14" height="16" stroke="#666" strokeWidth="3"><path d="M2 4l10 9M12 4L2 13" /></svg></MdiButton>
          </MdiButtons>
        </MenuBar>

        <ToolRow $h={48}>
          <Band $pad={11}>
            <Tool $w={65} $gap={12} aria-label="Line studies"><LineIcon /><Caret /></Tool>
            <Tool $w={65} $gap={10} aria-label="Profiles"><ProfileIcon /><Caret /></Tool>
            <Tool aria-label="Market watch"><DollarIcon /></Tool>
            <Divider />
            <Tool>IDE</Tool>
            <Tool aria-label="Market"><BagIcon /></Tool>
            <Tool aria-label="Signals"><SignalIcon /></Tool>
            <Tool aria-label="VPS"><CloudIcon /></Tool>
            <Tool aria-label="Copy trading"><RadarIcon /></Tool>
            <Divider />
            <Tool $w={168} $on $gap={10} $ink="#000"><PlayIcon />アルゴリズム取引</Tool>
            <Tool $w={121} $gap={10} $ink="#000"><NewDocIcon />新規注文</Tool>
            <Divider />
            <Tool aria-label="Bars"><BarsIcon /></Tool>
            <Tool $on aria-label="Candles"><CandlesIcon /></Tool>
            <Tool aria-label="Line"><ZigIcon /></Tool>
            <Divider />
            <Tool aria-label="Zoom in"><ZoomIcon plus /></Tool>
            <Tool aria-label="Zoom out"><ZoomIcon /></Tool>
            <Tool aria-label="Tile"><GridIcon /></Tool>
            <Divider />
            <Tool $on aria-label="Auto scroll"><ShiftIcon end /></Tool>
            <Tool aria-label="Chart shift"><ShiftIcon /></Tool>
            <Divider />
            <Tool aria-label="Screenshot"><CameraIcon /></Tool>
          </Band>
          <Search>
            <button aria-label="Search"><svg width="22" height="22" fill="none" stroke="#111" strokeWidth="1.700"><circle cx="9" cy="9" r="8" /><path d="M15 15l6 6" /></svg></button>
            <AccountButton aria-label="Account">
              <svg width="20" height="22" fill="none" stroke="#111" strokeWidth="1.700"><circle cx="10" cy="11" r="9" /><circle cx="10" cy="8" r="3.500" /><path d="M4 18q1-4 6-4t6 4" /></svg>
              <Badge>1</Badge>
            </AccountButton>
            <Level><svg width="14" height="13" fill={MINT} stroke={GREEN} strokeWidth="1.500"><path d="M7 1l5.500 6H9v5H5V7H1.500z" /></svg>LVL</Level>
            <Meter />
          </Search>
        </ToolRow>

        <ToolRow $h={48}>
          <Band $pad={13}>
            <Tool $on aria-label="Cursor"><CursorIcon /></Tool>
            <Tool aria-label="Crosshair"><CrossIcon /></Tool>
            <Divider />
            <Tool aria-label="Vertical line"><VLineIcon /></Tool>
            <Tool aria-label="Horizontal line"><HLineIcon /></Tool>
            <Tool aria-label="Trend line"><TrendIcon /></Tool>
            <Tool aria-label="Channel"><ChannelIcon /></Tool>
            <Tool aria-label="Fibonacci"><FiboIcon /></Tool>
            <Tool aria-label="Text"><TextIcon /></Tool>
            <Tool $w={65} $gap={10} aria-label="Shapes"><ShapesIcon /><Caret /></Tool>
          </Band>
          <Band $pad={15}>
            {["M1", "M5", "M15", "M30", "H1", "H4", "D1", "W1", "MN"].map(t => <Tool key={t} $on={t === "H1"}>{t}</Tool>)}
          </Band>
        </ToolRow>

        <Workspace>
          <Navigator>
            <PanelHead>
              <PanelTitle>ナビゲータ</PanelTitle>
              <CloseButton aria-label="Close navigator"><svg width="9" height="9" stroke="#000" strokeWidth="2.500"><path d="M1 1l7 7M8 1L1 8" /></svg></CloseButton>
            </PanelHead>
            <NavTree />
            <NavTabs><SheetTab $on>一般</SheetTab><SheetTab>お気に入り</SheetTab></NavTabs>
          </Navigator>
          <ChartPane><PriceChart /><Order /></ChartPane>
        </Workspace>

        <Toolbox>
          <Rail>
            <CloseButton aria-label="Close toolbox"><svg width="9" height="9" stroke="#000" strokeWidth="2.500"><path d="M1 1l7 7M8 1L1 8" /></svg></CloseButton>
            <RailTitle>ツールボックス</RailTitle>
          </Rail>
          <ToolboxMain>
            <Trades>
              <thead>
                <tr>{COLUMNS.map(([t, w, left], i) => <Th key={i} $w={w} $left={left}>{t}{t === "チケット" && <SortMark />}</Th>)}</tr>
              </thead>
              <tbody>
                <tr>
                  <Total colSpan={10}>{" •   残高: 1 153 342 JPY  有効証拠金: 1 153 342  余剰証拠金: 1 153 342"}</Total>
                  <Total $right>0</Total><Total colSpan={2} />
                </tr>
              </tbody>
            </Trades>
            <SheetBar>
              {SHEETS.map(([t, w], i) => (
                <SheetCell key={t} $w={w} $on={i === 0} $last={i === SHEETS.length - 1}>{t}{t === "受信トレイ" && <Count>8</Count>}</SheetCell>
              ))}
              <Shortcuts>
                <Shortcut href="#market"><BagIcon w={18} h={21} />市場</Shortcut>
                <Shortcut href="#signals"><SignalIcon w={24} h={20} />シグナル</Shortcut>
                <Shortcut href="#vps"><CloudIcon w={24} h={22} />VPS</Shortcut>
                <Shortcut href="#tester"><Gear green w={23} />テスター</Shortcut>
              </Shortcuts>
            </SheetBar>
          </ToolboxMain>
        </Toolbox>

        <StatusBar>
          <Status $first $grow>F1を押してヘルプを開く</Status>
          {STATUS.map(([t, w]) => <Status key={t} $w={w}>{t}</Status>)}
          <Status $w={177}>
            <svg width="22" height="16" stroke={GREEN} strokeWidth="2"><path d="M3 16v-4M7 16V9M11 16V6M15 16V3" /><path d="M19 16V0" stroke="#ccc" /></svg>179.16 ms
          </Status>
        </StatusBar>

        <Taskbar>
          <StartButton aria-label="Start"><svg width="24" height="24" fill="#fff"><path d="M0 3.500l10-1.500v9.500H0zM11 1.800L24 0v11.500H11zM0 12.500h10V22L0 20.500zM11 12.500h13V24l-13-1.800z" /></svg></StartButton>
          <SearchBox>
            <svg width="26" height="26" fill="none" stroke="#e8e8e8" strokeWidth="1.700"><circle cx="16" cy="9" r="8" /><path d="M10 15L1 25" /></svg>
            <SearchInput aria-label="検索" placeholder="ここに入力して検索" />
            <Helper />
          </SearchBox>
          <Task aria-label="Cortana"><svg width="26" height="26" fill="none" stroke="#fff" strokeWidth="3"><circle cx="13" cy="13" r="10.500" /></svg></Task>
          <Task aria-label="Task view"><svg width="26" height="24" fill="none" stroke="#fff" strokeWidth="1.500"><path d="M1 0v4h16V0M1 24v-4h16v4M1 8h16v8H1zM23 0v4M23 9v15" /><path d="M21 7h4" strokeWidth="3" /></svg></Task>
          <Task aria-label="Titan FX"><TitanLogo w={35} h={32} /></Task>
          <Task aria-label="Library"><BookIcon /></Task>
          <Task $on aria-label="Titan FX MT5"><TitanLogo w={35} h={32} /></Task>
          <Task aria-label="MetaEditor"><MetaEditorIcon /></Task>
          <Task $run aria-label="Paint"><PaintIcon /></Task>
          <Task $run aria-label="Excel"><ExcelIcon /></Task>
          <Scroller>
            <svg width="12" height="8" fill="none" stroke="#555" strokeWidth="2"><path d="M1 7l5-5 5 5" /></svg>
            <svg width="12" height="8" fill="none" stroke="#555" strokeWidth="2"><path d="M1 1l5 5 5-5" /></svg>
          </Scroller>
          <Weather>
            <svg width="34" height="34"><defs><linearGradient id="moon" x2="0" y2="1"><stop stopColor="#ffd25a" /><stop offset="1" stopColor="#f08020" /></linearGradient></defs><path d="M22 0a17 17 0 1 1-22 23C14 26 26 14 22 0z" fill="url(#moon)" /></svg>
            11°C
          </Weather>
          <Tray>
            <TrayIcon><path d="M2 16l9-8 9 8" strokeWidth="1.800" /></TrayIcon>
            <TrayIcon><path d="M2 21A19 19 0 0 1 20 4M7 21A14 14 0 0 1 20 9M12 21a9 9 0 0 1 8-7M16 21a5 5 0 0 1 4-3" /></TrayIcon>
            <TrayIcon><rect x="4" y="6" width="9" height="12" rx="2" /><path d="M13 11l5-3v8l-5-3M6 3q4-3 9 0M6 21q4 3 9 0" /></TrayIcon>
            <TrayIcon w={26}><path d="M5 17a5 5 0 0 1 1-10 6 6 0 0 1 11 1q4 1 4 5t-3 4z" fill="#d8d8d8" stroke="none" /><circle cx="18" cy="17" r="6.500" fill="#fff" stroke="#2a7fd0" /><path d="M15 17a3 3 0 0 1 6-1M21 18a3 3 0 0 1-6 1" stroke="#2a7fd0" /></TrayIcon>
            <TrayIcon w={26}><rect x="7" y="8" width="16" height="11" /><rect x="9" y="10" width="12" height="7" fill="#fff" /><path d="M24 12v4M2 3v4M6 3v4M1 7h6v3q-1 2-3 2t-3-2zM4 12v5h3" /></TrayIcon>
            <TrayIcon w={24}><path d="M2 9h4l5-5v16l-5-5H2zM14 9q2 3 0 6M17 6q4 6 0 12" /><path d="M20 4q6 8 0 16" stroke="#8a9498" /></TrayIcon>
            <ImeMode>A</ImeMode>
          </Tray>
          <Clock><span>23:41:54</span><span>2022/12/04</span></Clock>
          <Notice aria-label="Notifications">
            <svg width="24" height="24" viewBox="0 0 24 24"><path d="M0 0h24v19h-5v5l-5-5H0z" fill="#fff" /><path d="M4 5h16M4 9h16M4 13h11" stroke="#1f3039" strokeWidth="1.500" /></svg>
            <NoticeCount>23</NoticeCount>
          </Notice>
        </Taskbar>
      </Shell>
    </>
  );
}
